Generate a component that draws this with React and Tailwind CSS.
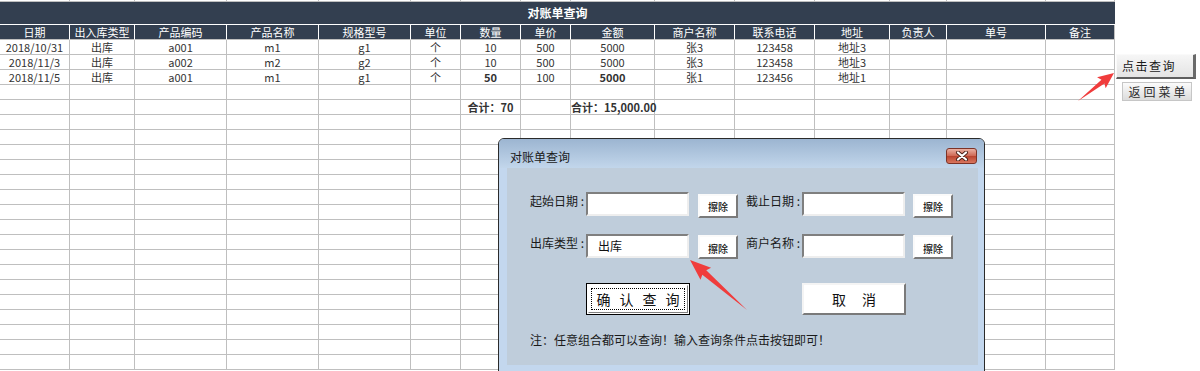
const GRID = 'grid grid-cols-[70px_65px_92px_92px_92px_50px_60px_50px_84px_80px_80px_75px_57px_99px_69px]'

const HEADERS = ['日期', '出入库类型', '产品编码', '产品名称', '规格型号', '单位', '数量', '单价', '金额', '商户名称', '联系电话', '地址', '负责人', '单号', '备注']

const ROWS = [
  ['2018/10/31', '出库', 'a001', 'm1', 'g1', '个', '10', '500', '5000', '张3', '123458', '地址3', '', '', ''],
  ['2018/11/3', '出库', 'a002', 'm2', 'g2', '个', '10', '500', '5000', '张3', '123458', '地址3', '', '', ''],
  ['2018/11/5', '出库', 'a001', 'm1', 'g1', '个', '50', '100', '5000', '张1', '123456', '地址1', '', '', ''],
]

// bold cells in the third row
const BOLD = { 2: [6, 8] }

function blankRow() {
  return HEADERS.map(() => '')
}

function Arrow({ x1, y1, x2, y2, head, hw, sw }) {
  const L = Math.hypot(x2 - x1, y2 - y1)
  const a = (Math.atan2(y2 - y1, x2 - x1) * 180) / Math.PI
  const n = L - head
  const pts = `0,0 ${n},${-sw} ${n - 2},${-hw} ${L},0 ${n - 2},${hw} ${n},${sw}`
  return <polygon points={pts} transform={`translate(${x1} ${y1}) rotate(${a})`} fill="#f03c3c" />
}

function ClearBtn() {
  return (
    <button className="w-[40px] h-[24px] bg-white border-2 border-t-[#fafafa] border-l-[#fafafa] border-b-[#7a7a7a] border-r-[#7a7a7a] text-[10px] font-medium text-[#111] leading-none pt-[3px]">
      擦除
    </button>
  )
}

function Field({ label, value }) {
  return (
    <>
      <span className="w-[56px] mt-[1px] text-[12px] leading-[16px] text-[#1a1a1a] whitespace-nowrap">{label} :</span>
      <div className="w-[103px] h-[24px] bg-white border-2 border-t-[#7f7f7f] border-l-[#7f7f7f] border-b-[#eeeeee] border-r-[#eeeeee] pl-[10px] text-[12px] leading-[20px] text-[#111]">
        {value}
      </div>
    </>
  )
}

function Dialog() {
  return (
    <div className="absolute left-[498px] top-[138px] w-[487px] h-[240px] rounded-t-[6px] border border-[#2b2b2b] bg-[#c3d7ee] flex flex-col">
      <div className="h-[29px] rounded-t-[5px] bg-[linear-gradient(180deg,#9cb5d1,#c2d6eb)] flex items-start justify-between pl-[11px] pr-[7px]">
        <span className="mt-[11px] text-[12px] leading-[14px] text-[#1a1a1a]">对账单查询</span>
        <div className="mt-[9px] w-[31px] h-[16px] rounded-[3px] border border-[#7c3327] bg-[linear-gradient(180deg,#eab0a2,#cf6a56_48%,#b9442f_52%,#d9765f)] flex items-center justify-center">
          <svg width="14" height="10" viewBox="0 0 14 10">
            <path d="M3 1.5 L11 8.5 M11 1.5 L3 8.5" stroke="#4a2018" strokeWidth="4" strokeLinecap="round" />
            <path d="M3 1.5 L11 8.5 M11 1.5 L3 8.5" stroke="#ffffff" strokeWidth="2.2" strokeLinecap="round" />
          </svg>
        </div>
      </div>
      <div className="ml-[8px] mr-[6px] h-[197px] bg-[#bfcddb] pl-[23px] pt-[24px] flex flex-col">
        <div className="flex items-start">
          <Field label="起始日期" value="" />
          <div className="ml-[9px]"><ClearBtn /></div>
          <div className="ml-[8px] flex items-start">
            <Field label="截止日期" value="" />
          </div>
          <div className="ml-[8px]"><ClearBtn /></div>
        </div>
        <div className="flex items-start mt-[16px]">
          <Field label="出库类型" value="出库" />
          <div className="ml-[9px]"><ClearBtn /></div>
          <div className="ml-[8px] flex items-start">
            <Field label="商户名称" value="" />
          </div>
          <div className="ml-[8px]"><ClearBtn /></div>
        </div>
        <div className="flex items-start mt-[24px] pl-[56px]">
          <button className="w-[104px] h-[32px] bg-white border border-black p-[1px]">
            <div className="h-full border border-t-white border-l-white border-b-[#808080] border-r-[#808080] p-[2px]">
              <div className="h-full border border-dotted border-black flex items-center justify-center gap-[9px] text-[14px] text-[#111]">
                <span>确</span><span>认</span><span>查</span><span>询</span>
              </div>
            </div>
          </button>
          <button className="ml-[112px] w-[104px] h-[32px] bg-white border-2 border-t-[#f4f4f4] border-l-[#f4f4f4] border-b-[#7a7a7a] border-r-[#7a7a7a] flex items-center justify-center gap-[16px] text-[14px] text-[#111]">
            <span>取</span><span>消</span>
          </button>
        </div>
        <p className="mt-[17px] text-[12px] leading-[16px] text-[#1a1a1a]">注：任意组合都可以查询！输入查询条件点击按钮即可！</p>
      </div>
    </div>
  )
}

export default function App() {
  const body = [...ROWS, blankRow(), blankRow()]
  while (body.length < 22) body.push(blankRow())
  body[4][6] = '合计：70'
  body[4][8] = '合计：15,000.00'

  return (
    <div className="relative w-[1200px] h-[371px] overflow-hidden bg-white font-['Noto_Sans_CJK_SC',sans-serif]">
      <div className="flex">
        {/* sheet */}
        <div className="w-[1116px] flex flex-col">
          <div className={`${GRID} h-[2px]`}>
            {HEADERS.map((h, i) => (
              <div key={i} className="border-r border-b border-[#bfbfbf]" />
            ))}
          </div>
          <div className="w-[1115px] h-[23px] bg-[#333f50] border-b border-white flex items-center justify-center text-[12px] font-bold text-white">
            对账单查询
          </div>
          <div className={`${GRID} h-[15px]`}>
            {HEADERS.map((h, i) => (
              <div key={i} className={`bg-[#333f50] border-b border-b-[#bfbfbf] text-center text-[11px] leading-[14px] text-white ${i < 14 ? 'border-r border-r-white' : 'border-r border-r-[#bfbfbf]'}`}>
                {h}
              </div>
            ))}
          </div>
          {body.map((row, r) => (
            <div key={r} className={`${GRID} h-[15px]`}>
              {row.map((c, i) => {
                const bold = r === 4 || (BOLD[r] && BOLD[r].includes(i))
                return (
                  <div key={i} className={`border-r border-b border-[#bfbfbf] text-center text-[11px] leading-[14px] text-[#333] whitespace-nowrap ${bold ? 'font-bold' : ''}`}>
                    {c}
                  </div>
                )
              })}
            </div>
          ))}
        </div>
        {/* side buttons */}
        <div className="flex flex-col items-start pt-[54px]">
          <button className="w-[80px] h-[25px] bg-[linear-gradient(180deg,#f6f6f6,#e4e4e4)] border border-t-[#fafafa] border-l-[#fafafa] border-r-[3px] border-r-[#6a6a6a] border-b-2 border-b-[#5e5e5e] text-left pl-[5px] text-[12px] tracking-[1.5px] text-[#1a1a1a]">
            点击查询
          </button>
          <button className="mt-[3px] ml-[6px] w-[70px] h-[19px] bg-[linear-gradient(180deg,#fbfbfb,#dcdcdc)] border border-[#c6c6c6] text-[12px] leading-[16px] tracking-[3px] text-[#2a2a2a] pl-[3px]">
            返回菜单
          </button>
        </div>
      </div>

      <Dialog />

      <svg className="absolute inset-0 pointer-events-none" width="1200" height="371">
        <Arrow x1={1078} y1={101} x2={1114} y2={73} head={14} hw={7} sw={2.4} />
        <Arrow x1={747} y1={310} x2={690} y2={260} head={19} hw={8} sw={3} />
      </svg>
    </div>
  )
}
